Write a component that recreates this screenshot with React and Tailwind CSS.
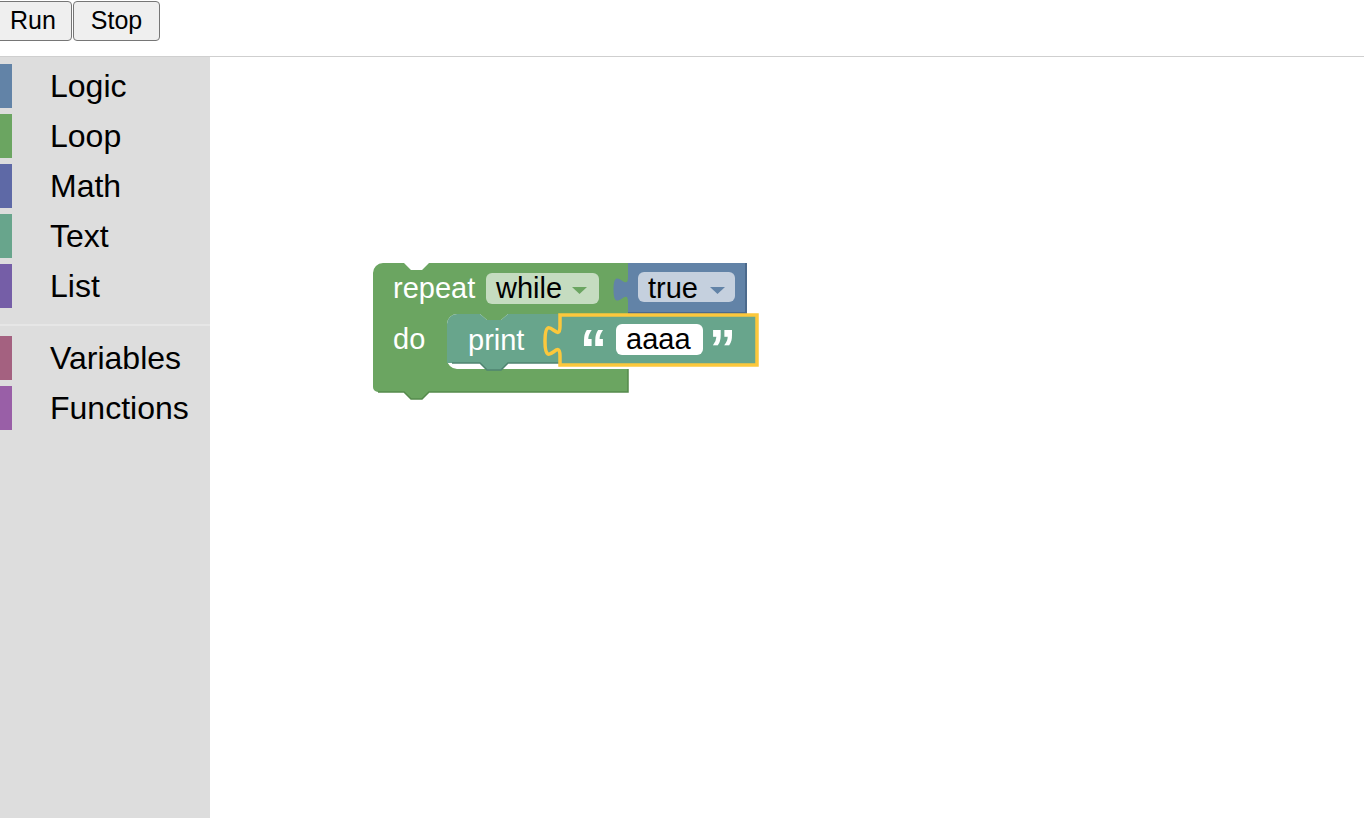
import React from "react";

const categories = [
  { name: "Logic", color: "bg-[#6283a7]" },
  { name: "Loop", color: "bg-[#6ba561]" },
  { name: "Math", color: "bg-[#5e69a6]" },
  { name: "Text", color: "bg-[#68a58c]" },
  { name: "List", color: "bg-[#755ea7]" },
];

const extraCategories = [
  { name: "Variables", color: "bg-[#a46180]" },
  { name: "Functions", color: "bg-[#995fa7]" },
];

const CategoryRow = ({ name, color }) => (
  <div className="flex items-center h-[44px] mb-[6px] cursor-pointer">
    <div className={`w-[12px] h-full ${color}`} />
    <span className="ml-[38px] text-[32px] leading-none text-black">{name}</span>
  </div>
);

const Blocks = () => (
  <svg
    className="absolute left-0 top-0"
    width="700"
    height="400"
    viewBox="210 57 700 400"
  >
    {/* repeat while */}
    <path
      d="M 373 273 A 10 10 0 0 1 383 263 H 404 L 411 270 H 422 L 429 263 H 628 V 314 H 508 L 501 320 H 487 L 480 314 H 457 A 10 10 0 0 0 447 324 V 359 A 10 10 0 0 0 457 369 H 628 V 392 H 429 L 422 399 H 411 L 404 392 H 378 A 5 5 0 0 1 373 387 Z"
      fill="#6ba561"
    />
    <path
      d="M 628 369 V 392 H 429 L 422 399 H 411 L 404 392 H 378"
      fill="none"
      stroke="#558a4c"
      strokeWidth="1.5"
    />
    <text x="393" y="298" fontSize="29" fill="#ffffff">repeat</text>
    <rect x="486" y="273" width="113" height="31" rx="6" fill="#c5dcc0" />
    <text x="496" y="298" fontSize="29" fill="#000000">while</text>
    <path d="M 572 287 H 587 L 579.5 294 Z" fill="#6ba561" />
    <text x="393" y="349" fontSize="29" fill="#ffffff">do</text>

    {/* print */}
    <path
      d="M 447 324 A 10 10 0 0 1 457 314 H 480 L 487 320 H 501 L 508 314 H 566 V 363 H 508 L 501 370 H 487 L 480 363 H 447 Z"
      fill="#68a58c"
    />
    <path
      d="M 566 363 H 508 L 501 370 H 487 L 480 363 H 452"
      fill="none"
      stroke="#4f8470"
      strokeWidth="1.5"
    />
    <text x="468" y="350" fontSize="29" fill="#ffffff">print</text>

    {/* true */}
    <path
      d="M 628 263 V 277 c 0 16.7 -14.5 -13.3 -14.5 12.5 s 14.5 -4.2 14.5 12.5 V 313 H 746 V 263 Z"
      fill="#6283a7"
    />
    <path d="M 746 263 V 313 H 628" fill="none" stroke="#4c6a8c" strokeWidth="2" />
    <rect x="638" y="272" width="97" height="30" rx="6" fill="#c5d0de" />
    <text x="648" y="298" fontSize="29" fill="#000000">true</text>
    <path d="M 710 287 H 725 L 717.5 294 Z" fill="#6283a7" />

    {/* text "aaaa" (selected) */}
    <path
      d="M 560 315 V 326 c 0 20 -15 -16 -15 15 s 15 -5 15 15 V 365 H 757 V 315 Z"
      fill="#68a58c"
      stroke="#fcc83c"
      strokeWidth="3.5"
    />
    <text x="580" y="367" fontSize="54" fontWeight="bold" fill="#ffffff">{"\u201C"}</text>
    <rect x="616" y="324" width="87" height="31" rx="6" fill="#ffffff" />
    <text x="626" y="349" fontSize="29" fill="#000000">aaaa</text>
    <text x="709" y="367" fontSize="54" fontWeight="bold" fill="#ffffff">{"\u201D"}</text>
  </svg>
);

const App = () => {
  return (
    <div className="flex flex-col h-screen bg-white font-['Liberation_Sans',Arial,sans-serif] overflow-hidden">
      <div className="flex items-start gap-[1px] h-[57px] pt-[1px] border-b border-[#cfcfcf]">
        <button className="ml-[-6px] w-[78px] h-[40px] text-[25px] text-black bg-[#efefef] border border-[#767676] rounded-[4px]">
          Run
        </button>
        <button className="w-[87px] h-[40px] text-[25px] text-black bg-[#efefef] border border-[#767676] rounded-[4px]">
          Stop
        </button>
      </div>
      <div className="flex flex-1 min-h-0">
        <div className="flex flex-col w-[210px] bg-[#dddddd] pt-[7px]">
          {categories.map((c) => (
            <CategoryRow key={c.name} {...c} />
          ))}
          <div className="h-[2px] bg-[#e6e6e6] mt-[10px] mb-[10px]" />
          {extraCategories.map((c) => (
            <CategoryRow key={c.name} {...c} />
          ))}
        </div>
        <div className="relative flex-1 bg-white">
          <Blocks />
        </div>
      </div>
    </div>
  );
};

export default App;
